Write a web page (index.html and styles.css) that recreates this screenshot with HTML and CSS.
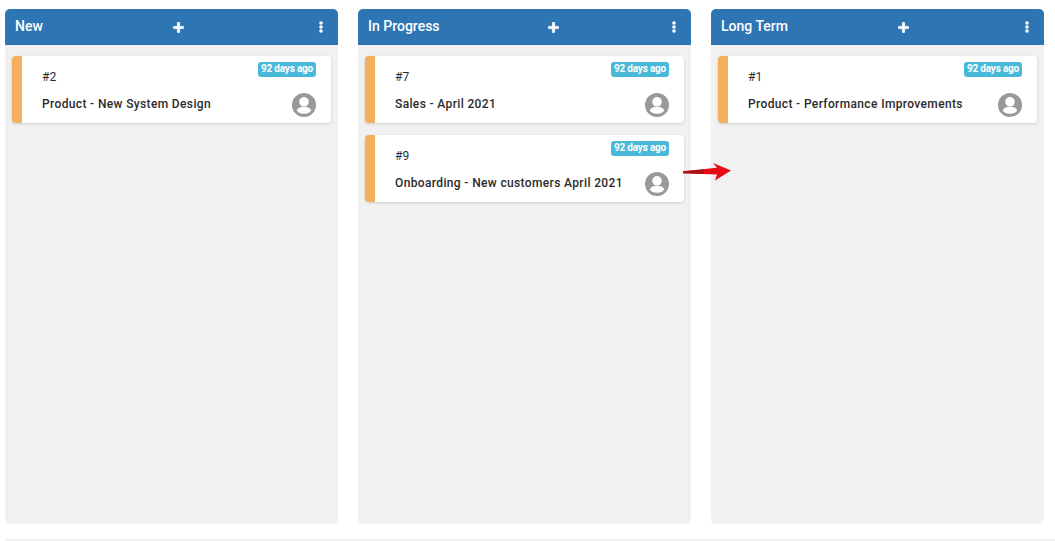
FILE: index.html
```html
<!DOCTYPE html>
<html lang="en">

<head>
    <title>Board</title>
    <meta name="viewport" content="width=device-width, initial-scale=1" />
    <link rel="stylesheet" href="styles.css">
</head>

<body>
    <svg width="0" height="0" class="defs">
        <symbol id="user" viewBox="0 0 24 24">
            <circle cx="12" cy="12" r="12" fill="#999" />
            <circle cx="12" cy="8.8" r="4.8" fill="#fff" />
            <ellipse cx="12" cy="17.2" rx="7" ry="3.5" fill="#fff" />
        </symbol>
        <symbol id="plus" viewBox="0 0 11 11">
            <path d="M4.4 1.2a1.1 1.1 0 0 1 2.2 0V4.4h3.2a1.1 1.1 0 0 1 0 2.2H6.6v3.2a1.1 1.1 0 0 1-2.2 0V6.6H1.2a1.1 1.1 0 0 1 0-2.2h3.2z" fill="#fff" stroke="#fff" stroke-width="0.8" />
        </symbol>
        <symbol id="dots" viewBox="0 0 4 12">
            <circle cx="2" cy="2" r="1.8" fill="#fff" />
            <circle cx="2" cy="6" r="1.8" fill="#fff" />
            <circle cx="2" cy="10" r="1.8" fill="#fff" />
        </symbol>
    </svg>

    <div class="board">
        <section class="column">
            <header class="column-head">
                <span class="column-name">New</span>
                <svg class="icon-plus"><use href="#plus" /></svg>
                <svg class="icon-dots"><use href="#dots" /></svg>
            </header>
            <div class="column-body">
                <div class="card">
                    <span class="badge">92 days ago</span>
                    <p class="card-id">#2</p>
                    <div class="card-row">
                        <span class="card-title">Product - New System Design</span>
                        <svg class="avatar"><use href="#user" /></svg>
                    </div>
                </div>
            </div>
        </section>

        <section class="column">
            <header class="column-head">
                <span class="column-name">In Progress</span>
                <svg class="icon-plus"><use href="#plus" /></svg>
                <svg class="icon-dots"><use href="#dots" /></svg>
            </header>
            <div class="column-body">
                <div class="card">
                    <span class="badge">92 days ago</span>
                    <p class="card-id">#7</p>
                    <div class="card-row">
                        <span class="card-title">Sales - April 2021</span>
                        <svg class="avatar"><use href="#user" /></svg>
                    </div>
                </div>
                <div class="card">
                    <span class="badge">92 days ago</span>
                    <p class="card-id">#9</p>
                    <div class="card-row">
                        <span class="card-title">Onboarding - New customers April 2021</span>
                        <svg class="avatar"><use href="#user" /></svg>
                    </div>
                </div>
            </div>
        </section>

        <section class="column">
            <header class="column-head">
                <span class="column-name">Long Term</span>
                <svg class="icon-plus"><use href="#plus" /></svg>
                <svg class="icon-dots"><use href="#dots" /></svg>
            </header>
            <div class="column-body">
                <div class="card">
                    <span class="badge">92 days ago</span>
                    <p class="card-id">#1</p>
                    <div class="card-row">
                        <span class="card-title">Product - Performance Improvements</span>
                        <svg class="avatar"><use href="#user" /></svg>
                    </div>
                </div>
            </div>
        </section>
    </div>

    <hr class="rule" />

    <svg class="arrow" width="50" height="20" viewBox="0 0 50 20">
        <path d="M1 9.2 L35 5.8 L31 1 L49 8.5 L33 18.5 L35 12.6 L1 11.2 Z" fill="#ec0a12" />
        <path d="M1 9.2 L22 7.4 L22 12 L1 11.2 Z" fill="#a8141c" />
    </svg>
</body>

</html>
```

FILE: styles.css
```css
html,
body {
    height: 100%;
}

body {
    margin: 0;
    padding: 9px 11px 0 5px;
    box-sizing: border-box;
    background: #fff;
    color: #2b2b2b;
    font-family: Roboto, "Liberation Sans", sans-serif;
    overflow: hidden;
}

.defs {
    position: absolute;
}

.board {
    display: flex;
    gap: 20px;
    height: 515px;
}

.column {
    flex: 1;
    display: flex;
    flex-direction: column;
    background: #f1f1f1;
    border-radius: 5px;
    overflow: hidden;
}

.column-head {
    display: flex;
    align-items: center;
    justify-content: space-between;
    height: 36px;
    padding: 0 15px 0 10px;
    background: #2e75b4;
    color: #fff;
}

.column-name {
    font-size: 14px;
    font-weight: 500;
    margin-top: -2px;
}

.icon-plus {
    width: 11px;
    height: 11px;
    margin-right: 5px;
}

.icon-dots {
    width: 4px;
    height: 12px;
    margin-top: -1px;
}

.column-body {
    display: flex;
    flex-direction: column;
    gap: 12px;
    padding: 11px 7px;
}

.card {
    position: relative;
    height: 67px;
    box-sizing: border-box;
    padding: 15px 15px 0 20px;
    background: #fff;
    border-left: 10px solid #f4b05c;
    border-radius: 4px;
    box-shadow: 0 1px 3px rgba(0, 0, 0, 0.15);
}

.badge {
    position: absolute;
    top: 6px;
    right: 15px;
    height: 15px;
    padding: 0 3px;
    background: #4ab9d9;
    border-radius: 3px;
    color: #fff;
    font-size: 10px;
    font-weight: 700;
    letter-spacing: -0.2px;
    line-height: 14px;
}

.card-id {
    margin: 0;
    font-size: 12px;
    line-height: 12px;
}

.card-row {
    display: flex;
    align-items: center;
    justify-content: space-between;
    margin-top: 10px;
}

.card-title {
    font-size: 12px;
    font-weight: 500;
    letter-spacing: 0.36px;
    margin-top: -3px;
}

.avatar {
    width: 24px;
    height: 24px;
}

.rule {
    margin: 15px -11px 0 0;
    border: 0;
    border-top: 2px solid #f1f1f1;
}

/* annotation drawn over the board */
.arrow {
    position: absolute;
    left: 682px;
    top: 162px;
}
```
